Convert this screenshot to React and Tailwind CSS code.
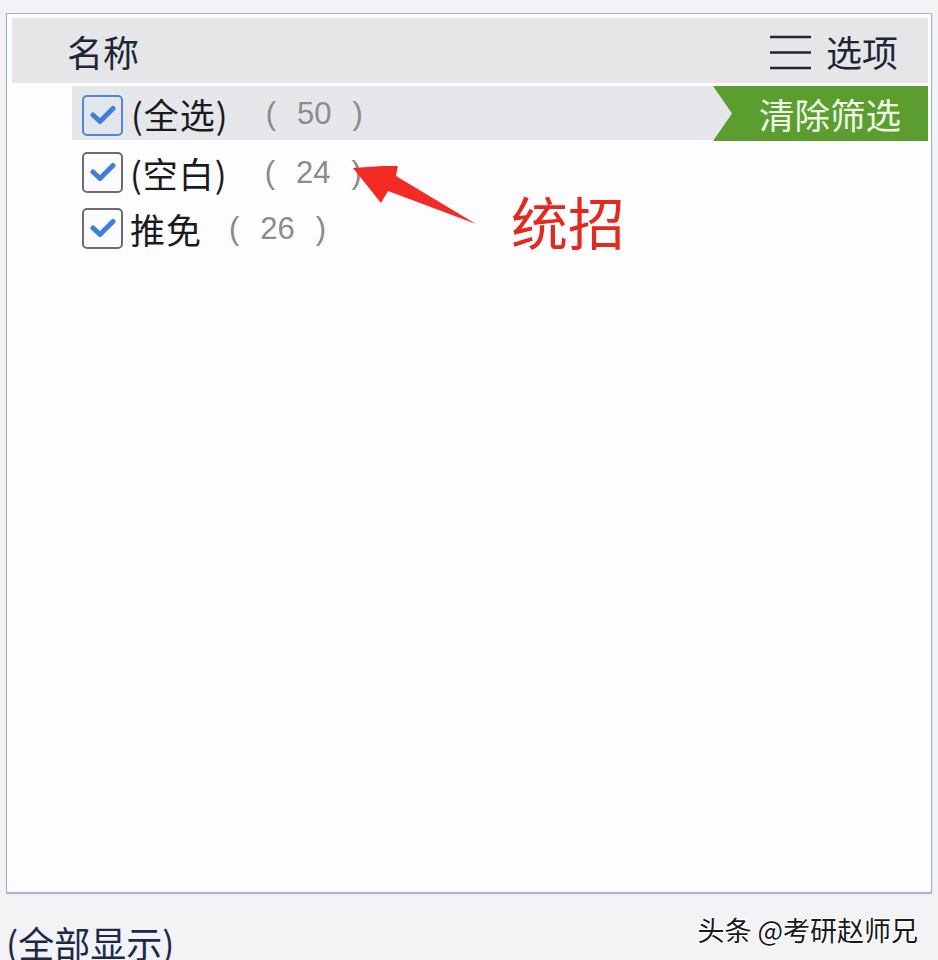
const cjk = { fontFamily: '"Noto Sans CJK SC", "Noto Sans", sans-serif' };
const num = { fontFamily: '"Liberation Sans", "Noto Sans CJK SC", sans-serif' };

function Check({ active }) {
  return (
    <div
      className={
        'w-[41px] h-[41px] shrink-0 rounded-[5px] border-2 flex items-center justify-center ' +
        (active ? 'border-[#4f8ad9] bg-[#e3e6ed]' : 'border-[#6d6d70] bg-[#fbfbfd]')
      }
    >
      <svg width="26" height="20" viewBox="0 0 26 20">
        <path d="M3 10 L10 16.5 L23 3.5" fill="none" stroke="#3e7fd9" strokeWidth="5" strokeLinecap="round" strokeLinejoin="round" />
      </svg>
    </div>
  );
}

function Count({ n }) {
  return (
    <span className="flex items-center gap-[21px] text-[31px] text-[#8c8c8c] leading-none" style={num}>
      <span>(</span>
      <span>{n}</span>
      <span>)</span>
    </span>
  );
}

const rows = [
  { label: '(空白)', n: 24, gap: 'ml-[37px]' },
  { label: '推免', n: 26, gap: 'ml-[27px]' },
];

export default function App() {
  return (
    <div className="w-[938px] h-[960px] overflow-hidden bg-[#f3f3f5] pt-[13px] pl-[6px] relative" style={cjk}>
      <div className="w-[926px] h-[880px] border border-[#9fb1c8] bg-[#fdfcfe] shadow-[0_1px_1px_rgba(120,140,170,0.5)] pt-[4px] pl-[5px] pr-[3px] relative">
        <div className="h-[65px] bg-[#e6e6e8] flex items-center justify-between pl-[55px] pr-[30px]">
          <span className="text-[36px] text-[#1e2638] leading-none">名称</span>
          <div className="flex items-center gap-[14px]">
            <svg width="43" height="36" viewBox="0 0 43 36" className="mt-[5px]">
              <path d="M1 2 H42 M1 17.5 H42 M1 33 H42" stroke="#1e2638" strokeWidth="2.6" />
            </svg>
            <span className="text-[36px] text-[#1e2638] leading-none">选项</span>
          </div>
        </div>

        <div className="mt-[3px] ml-[60px] h-[54px] bg-[#e6e7ea] flex items-center pl-[10px]">
          <div className="mt-[4px]"><Check active /></div>
          <span className="ml-[8px] text-[35px] tracking-[1px] text-[#1b1b1d] leading-none">(全选)</span>
          <span className="ml-[37px]"><Count n={50} /></span>
          <div className="flex-1" />
          <div className="w-[215px] h-[55px] self-start bg-[#5b9e2f] [clip-path:polygon(0_0,100%_0,100%_100%,0_100%,19px_50%)] flex items-center justify-end pr-[27px]">
            <span className="text-[35.5px] text-[#eef6e6] leading-none">清除筛选</span>
          </div>
        </div>

        <div className="mt-[4px] ml-[70px] flex flex-col">
          {rows.map((r) => (
            <div key={r.label} className="h-[56px] flex items-center">
              <Check />
              <span className="ml-[7px] text-[35px] tracking-[1px] text-[#1b1b1d] leading-none">{r.label}</span>
              <span className={r.gap}><Count n={r.n} /></span>
            </div>
          ))}
        </div>

        <svg className="absolute left-[344px] top-[152px]" width="130" height="60" viewBox="344 152 130 60">
          <path d="M346 154 L391 151 L389 162 L469 210 L381 177 L374 189 Z" fill="#f42a24" />
        </svg>
        <span className="absolute left-[504px] top-[178px] text-[57px] text-[#e22a1f] leading-none">统招</span>
      </div>

      <div className="flex items-start justify-between pr-[20px] mt-[23px]">
        <span className="mt-[8px] text-[36px] text-[#1c2a4a] leading-none">(全部显示)</span>
        <span className="text-[27px] text-[#1a1a1a] leading-none [text-shadow:1px_1px_0_#fff,-1px_-1px_0_#fff,1px_-1px_0_#fff,-1px_1px_0_#fff]">头条 @考研赵师兄</span>
      </div>
    </div>
  );
}
